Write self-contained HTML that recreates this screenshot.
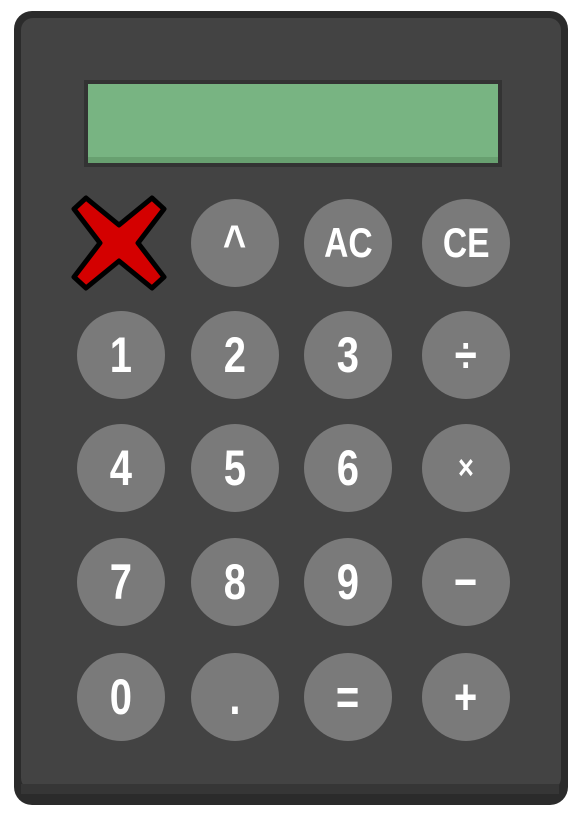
<!DOCTYPE html>
<html><head><meta charset="utf-8"><style>
html,body{margin:0;padding:0;background:#fff;width:572px;height:817px;overflow:hidden}
.body{position:absolute;left:14px;top:11px;width:554px;height:794px;background:#2b2b2b;border-radius:18px}
.inner{position:absolute;left:21px;top:18px;width:540px;height:772px;background:#434343;border-radius:12px}
.shadow{position:absolute;left:21px;top:784px;width:538px;height:10px;background:#363636}
.disp{position:absolute;left:84px;top:80px;width:418px;height:87px;background:#333}
.lcd{position:absolute;left:88px;top:84px;width:410px;height:79px;background:#78b482}
.lcd:after{content:"";position:absolute;left:0;bottom:0;width:100%;height:6px;background:#68a070}
.b{position:absolute;width:88px;height:88px;margin:-44px 0 0 -44px;background:#7a7a7a;border-radius:50%;color:#fff;font:bold 50px/88px "Liberation Sans",sans-serif;text-align:center}
.b span{display:inline-block;transform:scaleX(0.8)}
.s{font-size:42px}
</style></head><body>
<div class="body"></div><div class="inner"></div><div class="shadow"></div>
<div class="disp"></div><div class="lcd"></div>
<svg style="position:absolute;left:70px;top:195px" width="98" height="96" viewBox="0 0 98 96">
<path d="M4 14 L16 3 L49 30 L82 3 L94 14 L68 48 L94 82 L82 93 L49 66 L16 93 L4 82 L30 48 Z" fill="#d40000" stroke="#000" stroke-width="5" stroke-linejoin="round"/>
</svg>
<div class="b" style="left:235px;top:243px"><span>^</span></div>
<div class="b s" style="left:348px;top:243px"><span>AC</span></div>
<div class="b s" style="left:466px;top:243px"><span>CE</span></div>
<div class="b" style="left:121px;top:355px"><span>1</span></div>
<div class="b" style="left:235px;top:355px"><span>2</span></div>
<div class="b" style="left:348px;top:355px"><span>3</span></div>
<div class="b" style="left:466px;top:355px"><span>÷</span></div>
<div class="b" style="left:121px;top:468px"><span>4</span></div>
<div class="b" style="left:235px;top:468px"><span>5</span></div>
<div class="b" style="left:348px;top:468px"><span>6</span></div>
<div class="b" style="left:466px;top:468px;font-size:34px"><span>×</span></div>
<div class="b" style="left:121px;top:582px"><span>7</span></div>
<div class="b" style="left:235px;top:582px"><span>8</span></div>
<div class="b" style="left:348px;top:582px"><span>9</span></div>
<div class="b" style="left:466px;top:582px"><span>−</span></div>
<div class="b" style="left:121px;top:697px"><span>0</span></div>
<div class="b" style="left:235px;top:697px"><span>.</span></div>
<div class="b" style="left:348px;top:697px"><span>=</span></div>
<div class="b" style="left:466px;top:697px"><span>+</span></div>
</body></html>
